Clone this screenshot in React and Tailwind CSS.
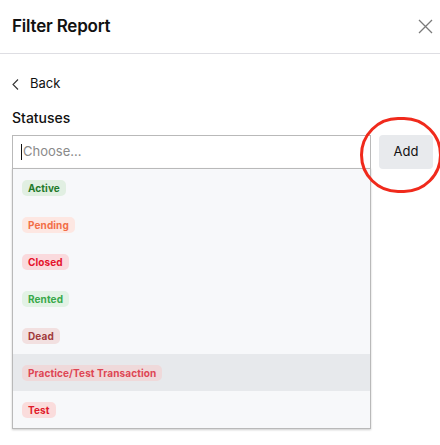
import React from 'react';

const statuses = [
  { label: 'Active', bg: 'bg-[#e1efe2]', text: 'text-[#1f7a2b]' },
  { label: 'Pending', bg: 'bg-[#fde7e2]', text: 'text-[#f26f48]' },
  { label: 'Closed', bg: 'bg-[#fadadd]', text: 'text-[#e5122c]' },
  { label: 'Rented', bg: 'bg-[#e2f2e5]', text: 'text-[#38a84a]' },
  { label: 'Dead', bg: 'bg-[#f2e0e0]', text: 'text-[#a23a3c]' },
  { label: 'Practice/Test Transaction', bg: 'bg-[#efd9da]', text: 'text-[#de4654]', active: true },
  { label: 'Test', bg: 'bg-[#fadcdc]', text: 'text-[#e01b2b]' },
];

export default function App() {
  return (
    <div className="relative w-[440px] h-[445px] bg-white overflow-hidden font-['Inter',sans-serif] text-[#111]">
      {/* Header */}
      <div className="h-[54px] flex items-center justify-between pl-3 pr-[7px] border-b border-[#dedee3]">
        <h1 className="text-[17px] font-semibold tracking-[-0.2px]">Filter Report</h1>
        <svg width="15" height="15" viewBox="0 0 15 15" className="text-[#7a7a7a]">
          <path d="M1 1 L14 14 M14 1 L1 14" stroke="currentColor" strokeWidth="1.3" fill="none" />
        </svg>
      </div>

      <div className="pl-3 pr-[7px]">
        {/* Back */}
        <div className="flex items-center gap-[11px] mt-[22px] h-[16px]">
          <svg width="7" height="11" viewBox="0 0 7 11" className="text-[#333]">
            <path d="M6 0.5 L1 5.5 L6 10.5" stroke="currentColor" strokeWidth="1.1" fill="none" />
          </svg>
          <span className="text-[13px]">Back</span>
        </div>

        <div className="mt-[17px] text-[14px] font-medium leading-[18px]">Statuses</div>

        <div className="flex gap-2 mt-[8px]">
          <div className="relative w-[359px] shrink-0">
            <div className="h-[34px] border border-[#b9b9b9] flex items-center pl-[8px] text-[13px] text-[#8a8a8a]">
              <span className="w-px h-[16px] bg-[#111] mr-px" />
              Choose...
            </div>
            {/* Dropdown */}
            <div className="absolute left-0 right-0 top-[33px] bg-[#f7f8fa] border border-[#b9b9b9] shadow-[0_1px_2px_rgba(0,0,0,0.2)]">
              {statuses.map((s) => (
                <div key={s.label} className={`h-[37px] flex items-center pl-[9px] ${s.active ? 'bg-[#e7e9ec]' : ''}`}>
                  <span className={`${s.bg} ${s.text} text-[10px] font-bold rounded-[5px] px-[6px] h-[16px] leading-[16px] tracking-[0.1px]`}>
                    {s.label}
                  </span>
                </div>
              ))}
            </div>
          </div>
          <button className="w-[54px] h-[34px] shrink-0 bg-[#e8eaed] rounded-[4px] text-[13px] text-[#111]">Add</button>
        </div>
      </div>

      {/* Annotation circle */}
      <div className="absolute left-[360px] top-[117px] w-[82px] h-[76px] rounded-full border-[3px] border-[#f02a1c]" />
    </div>
  );
}
